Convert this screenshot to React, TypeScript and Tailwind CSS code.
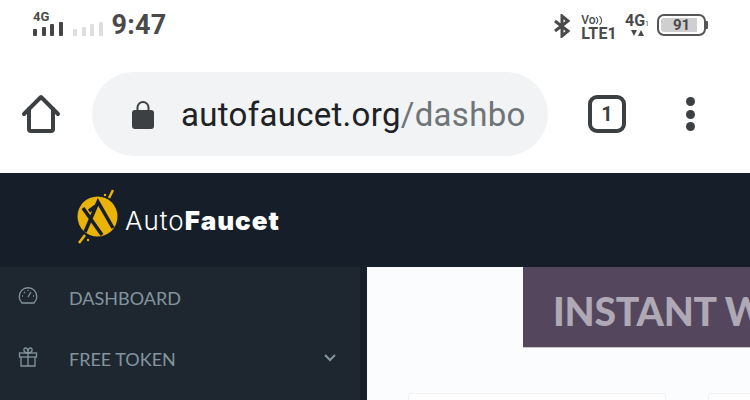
const roboto = "font-['Roboto',sans-serif]";

function SignalBars({ className }: { className: string }) {
  return (
    <div className="flex items-end gap-[4.500px]">
      <div className={`w-[4px] h-[7px] rounded-[1px] ${className}`}></div>
      <div className={`w-[4px] h-[9px] rounded-[1px] ${className}`}></div>
      <div className={`w-[4px] h-[12px] rounded-[1px] ${className}`}></div>
      <div className={`w-[4px] h-[14px] rounded-[1px] ${className}`}></div>
    </div>
  );
}

function StatusBar() {
  return (
    <div className={`h-[60px] flex items-start justify-between pt-[11px] pl-[33px] pr-[42px] text-[#4a4a4a] ${roboto}`}>
      <div className="flex items-end">
        <div className="flex flex-col w-[40px]">
          <span className="text-[13px] leading-[11px] font-bold">4G</span>
          <SignalBars className="bg-[#454545]" />
        </div>
        <SignalBars className="bg-[#dedede]" />
        <span className="ml-[9px] text-[27px] leading-[29px] font-bold tracking-[0.2px] -mb-[4px]">9:47</span>
      </div>
      <div className="flex items-start pt-[3px]">
        <svg width="18" height="24" viewBox="0 0 18 24" fill="none" stroke="#4a4a4a" strokeWidth="3">
          <path d="M2 7l13 10-6 5V2l6 5L2 17" />
        </svg>
        <div className="ml-[10px] flex flex-col leading-none font-bold">
          <div className="flex items-center h-[12px] text-[12px] leading-[12px] font-medium">
            Vo
            <svg width="10" height="11" viewBox="0 0 9 10" fill="none" stroke="#4a4a4a" strokeWidth="1">
              <path d="M1 2c2 2 2 4 0 6M4 1c2.600 2.500 2.600 5.500 0 8" />
            </svg>
          </div>
          <span className="text-[16px] leading-[13px] mt-[1px] tracking-[0.2px]">LTE1</span>
        </div>
        <div className="ml-[8px] flex flex-col items-start font-bold">
          <div className="flex items-end leading-none">
            <span className="text-[16px] leading-[14px]">4G</span>
            <span className="text-[7px] leading-[8px] font-normal">1</span>
          </div>
          <div className="flex ml-[6px] mt-[2px] gap-[1px]">
            <svg width="6" height="6" viewBox="0 0 6 6" fill="#4a4a4a">
              <path d="M0 0h6L3 6z" />
            </svg>
            <svg width="6" height="6" viewBox="0 0 6 6" fill="#4a4a4a">
              <path d="M3 0l3 6H0z" />
            </svg>
          </div>
        </div>
        <div className="ml-[8px] flex items-center">
          <div className="w-[49px] h-[22px] border-2 border-[#555] rounded-[7px] p-[2px]">
            <div className="w-[36px] h-full bg-[#cfcfcf] rounded-l-[3px] flex items-center justify-center text-[15px] font-bold pl-[5px]">
              91
            </div>
          </div>
          <div className="w-[2px] h-[8px] bg-[#555] rounded-r-[1px]"></div>
        </div>
      </div>
    </div>
  );
}

function Toolbar() {
  return (
    <div className={`h-[113px] flex items-start ${roboto}`}>
      <div className="w-[92px] h-[84px] mt-[12px] flex items-center pl-[21px]">
        <svg width="40" height="40" viewBox="0 0 40 40" fill="none" stroke="#3c4043" strokeWidth="4" strokeLinejoin="round" strokeLinecap="round">
          <path d="M3 20L20 3l17 17" />
          <path d="M8 15v20a2 2 0 0 0 2 2h20a2 2 0 0 0 2-2V15" />
        </svg>
      </div>
      <div className="w-[456px] h-[84px] mt-[12px] rounded-[42px] bg-[#f1f3f4] flex items-center pl-[40px]">
        <svg width="22" height="29" viewBox="0 0 22 29" className="shrink-0">
          <path d="M5.500 11V7.500a5.500 5.500 0 0 1 11 0V11" fill="none" stroke="#3c4043" strokeWidth="2" />
          <rect x="0" y="10" width="22" height="19" rx="3" fill="#3c4043" />
        </svg>
        <div className="ml-[27px] text-[33px] tracking-[0.3px] leading-[40px] mt-[1px] whitespace-nowrap">
          <span className="text-[#202124]">autofaucet.org</span>
          <span className="text-[#6f7478]">/dashbo</span>
        </div>
      </div>
      <div className="mt-[35px] ml-[40px] w-[38px] h-[38px] border-[4px] border-[#3c4043] rounded-[9px] flex items-center justify-center text-[20px] font-bold text-[#3c4043]">
        1
      </div>
      <div className="mt-[37px] ml-[60px] flex flex-col gap-[3.500px]">
        <div className="w-[9px] h-[9px] rounded-full bg-[#3c4043]"></div>
        <div className="w-[9px] h-[9px] rounded-full bg-[#3c4043]"></div>
        <div className="w-[9px] h-[9px] rounded-full bg-[#3c4043]"></div>
      </div>
    </div>
  );
}

function Logo() {
  return (
    <div className="flex items-center pl-[70px] h-[94px]">
      <svg width="56" height="64" viewBox="0 0 56 64" className="shrink-0 -mt-[6px]">
        <circle cx="27.500" cy="31.500" r="20" fill="#eab308" />
        <path d="M43 5l-4 8M15 50l-6 8" stroke="#eab308" strokeWidth="2.500" />
        <circle cx="35" cy="10" r="1.200" fill="#eab308" />
        <circle cx="18" cy="55" r="1.200" fill="#eab308" />
        <path d="M13 23l19 27M15 47l13-30 15 26M19 26l7-5" fill="none" stroke="#151e29" strokeWidth="3.500" />
      </svg>
      <span className="-ml-[1px] text-[26px] tracking-[1px] text-white font-['Inter',sans-serif] font-light">
        Auto<span className="font-black">Faucet</span>
      </span>
    </div>
  );
}

function MenuRow({ label, icon, chevron }: { label: string; icon: React.ReactNode; chevron?: boolean }) {
  return (
    <div className="h-[61px] flex items-center pl-[18px] pr-[24px]">
      <div className="w-[20px] flex justify-center -mt-[4px]">{icon}</div>
      <span className="ml-[31px] mt-[2px] text-[18px] text-[#82959e] font-['Lato',sans-serif] flex-1">{label}</span>
      {chevron && (
        <svg width="12" height="8" viewBox="0 0 12 8" fill="none" stroke="#82959e" strokeWidth="2" className="-mt-[2px]">
          <path d="M1 1l5 5 5-5" />
        </svg>
      )}
    </div>
  );
}

function Sidebar() {
  return (
    <div className="w-[360px] h-[133px] bg-[#1e2730] overflow-hidden">
      <MenuRow
        label="DASHBOARD"
        icon={
          <svg width="20" height="20" viewBox="0 0 20 20" fill="none" stroke="#82959e" strokeWidth="1.300">
            <path d="M4 17a8.800 8.800 0 1 1 12 0z" />
            <path d="M10 11l3-5M4 10h1M15 10h1M6 6l1 1M10 4v1" />
          </svg>
        }
      />
      <MenuRow
        label="FREE TOKEN"
        chevron
        icon={
          <svg width="20" height="20" viewBox="0 0 20 20" fill="none" stroke="#82959e" strokeWidth="1.300">
            <rect x="1.500" y="6" width="17" height="4" />
            <path d="M3 10v9h14v-9M10 6v13M10 6C5 6 5 1 7.500 1S10 4 10 6c0-2 0-5 2.500-5S15 6 10 6z" />
          </svg>
        }
      />
    </div>
  );
}

function Main() {
  return (
    <div className="flex-1 h-[133px] bg-[#fbfcfe] overflow-hidden">
      <div className="ml-[156px] h-[81px] bg-[#54475d] pl-[30px] pt-[8px] flex items-center overflow-hidden whitespace-nowrap border-b border-[#c5c3cb]">
        <span className="text-[39px] font-black text-[#aea9b5] tracking-[-0.2px] font-['Lato',sans-serif]">INSTANT WITHDRAW</span>
      </div>
      <div className="mt-[45px] flex pl-[41px] gap-[42px]">
        <div className="w-[258px] h-[40px] shrink-0 bg-white rounded-t-[3px] border border-[#eef0f4]"></div>
        <div className="w-[258px] h-[40px] shrink-0 bg-white rounded-t-[3px] border border-[#eef0f4]"></div>
      </div>
    </div>
  );
}

export default function App() {
  return (
    <div className="w-[750px] h-[400px] bg-white overflow-hidden">
      <StatusBar />
      <Toolbar />
      <div className="h-[227px] bg-[#151e29]">
        <Logo />
        <div className="flex gap-[7px]">
          <Sidebar />
          <Main />
        </div>
      </div>
    </div>
  );
}
